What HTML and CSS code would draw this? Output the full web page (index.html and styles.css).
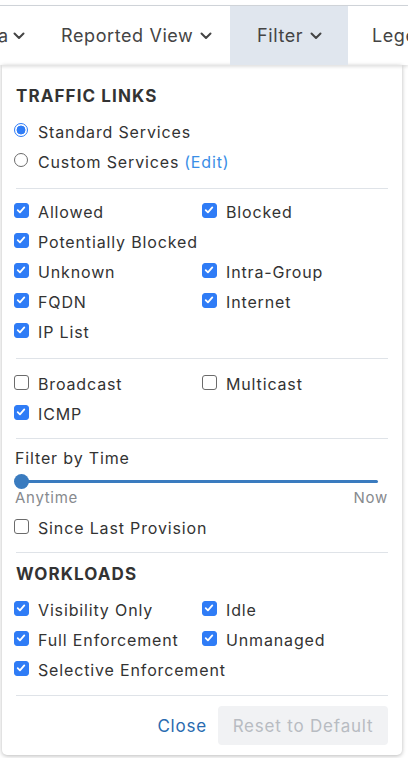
FILE: index.html
```html
<!DOCTYPE html>
<html>
<head>
<meta charset="utf-8">
<link rel="stylesheet" href="styles.css">
</head>
<body>
<div class="page">
  <nav class="topbar">
    <div class="tab tab-cut">a <svg class="chev" viewBox="0 0 12 8"><path d="M1.5 1.5 6 6l4.5-4.5" /></svg></div>
    <div class="tab tab-reported">Reported View <svg class="chev" viewBox="0 0 12 8"><path d="M1.5 1.5 6 6l4.5-4.5" /></svg></div>
    <div class="tab tab-filter active">Filter <svg class="chev" viewBox="0 0 12 8"><path d="M1.5 1.5 6 6l4.5-4.5" /></svg></div>
    <div class="tab tab-legend">Legend</div>
  </nav>

  <div class="panel">
    <h3 class="heading">TRAFFIC LINKS</h3>
    <div class="list">
      <label class="row"><span class="radio on"></span>Standard Services</label>
      <label class="row"><span class="radio"></span>Custom Services <a class="edit">(Edit)</a></label>
    </div>
    <hr class="divider d1">
    <div class="grid g1">
      <label class="row"><span class="cb on"><svg viewBox="0 0 16 16"><path d="M3.6 8.2 6.6 11.2 12.4 4.6"/></svg></span>Allowed</label>
      <label class="row"><span class="cb on"><svg viewBox="0 0 16 16"><path d="M3.6 8.2 6.6 11.2 12.4 4.6"/></svg></span>Blocked</label>
      <label class="row full"><span class="cb on"><svg viewBox="0 0 16 16"><path d="M3.6 8.2 6.6 11.2 12.4 4.6"/></svg></span>Potentially Blocked</label>
      <label class="row"><span class="cb on"><svg viewBox="0 0 16 16"><path d="M3.6 8.2 6.6 11.2 12.4 4.6"/></svg></span>Unknown</label>
      <label class="row"><span class="cb on"><svg viewBox="0 0 16 16"><path d="M3.6 8.2 6.6 11.2 12.4 4.6"/></svg></span>Intra-Group</label>
      <label class="row"><span class="cb on"><svg viewBox="0 0 16 16"><path d="M3.6 8.2 6.6 11.2 12.4 4.6"/></svg></span>FQDN</label>
      <label class="row"><span class="cb on"><svg viewBox="0 0 16 16"><path d="M3.6 8.2 6.6 11.2 12.4 4.6"/></svg></span>Internet</label>
      <label class="row full"><span class="cb on"><svg viewBox="0 0 16 16"><path d="M3.6 8.2 6.6 11.2 12.4 4.6"/></svg></span>IP List</label>
    </div>
    <hr class="divider d2">
    <div class="grid g2">
      <label class="row"><span class="cb"></span>Broadcast</label>
      <label class="row"><span class="cb"></span>Multicast</label>
      <label class="row full"><span class="cb on"><svg viewBox="0 0 16 16"><path d="M3.6 8.2 6.6 11.2 12.4 4.6"/></svg></span>ICMP</label>
    </div>
    <hr class="divider d3">
    <div class="time-title">Filter by Time</div>
    <div class="slider"><span class="track"></span><span class="thumb"></span></div>
    <div class="slider-labels"><span>Anytime</span><span>Now</span></div>
    <label class="row since"><span class="cb"></span>Since Last Provision</label>
    <hr class="divider d4">
    <h3 class="heading wl">WORKLOADS</h3>
    <div class="grid g3">
      <label class="row"><span class="cb on"><svg viewBox="0 0 16 16"><path d="M3.6 8.2 6.6 11.2 12.4 4.6"/></svg></span>Visibility Only</label>
      <label class="row"><span class="cb on"><svg viewBox="0 0 16 16"><path d="M3.6 8.2 6.6 11.2 12.4 4.6"/></svg></span>Idle</label>
      <label class="row"><span class="cb on"><svg viewBox="0 0 16 16"><path d="M3.6 8.2 6.6 11.2 12.4 4.6"/></svg></span>Full Enforcement</label>
      <label class="row"><span class="cb on"><svg viewBox="0 0 16 16"><path d="M3.6 8.2 6.6 11.2 12.4 4.6"/></svg></span>Unmanaged</label>
      <label class="row full"><span class="cb on"><svg viewBox="0 0 16 16"><path d="M3.6 8.2 6.6 11.2 12.4 4.6"/></svg></span>Selective Enforcement</label>
    </div>
    <hr class="divider d5">
    <div class="footer">
      <button class="btn-close">Close</button>
      <button class="btn-reset" disabled>Reset to Default</button>
    </div>
  </div>
</div>
</body>
</html>
```

FILE: styles.css
```css
* { box-sizing: border-box; }
html, body { margin: 0; padding: 0; background: #fff; }
body {
  font-family: Inter, "Noto Sans", "Liberation Sans", sans-serif;
  color: #333;
  width: 408px;
  height: 758px;
  overflow: hidden;
}
.page { padding-top: 5px; }

.topbar {
  display: flex;
  height: 60px;
  border-top: 1px solid #cfd3d8;
  box-shadow: 0 2px 3px rgba(0,0,0,0.12);
  position: relative;
  z-index: 1;
  overflow: hidden;
  white-space: nowrap;
}
.tab {
  display: flex;
  align-items: center;
  gap: 7px;
  font-size: 18px;
  letter-spacing: 0.6px;
  color: #444;
  flex: none;
  height: 59px;
}
.tab-cut { margin-left: -2px; width: 63px; gap: 4px; }
.tab-reported { width: 169px; }
.tab-filter { width: 118px; padding-left: 27px; background: #e0e6ee; }
.tab-legend { padding-left: 24px; }
.chev { width: 12px; height: 8px; fill: none; stroke: #444; stroke-width: 2; stroke-linecap: round; stroke-linejoin: round; }

.panel {
  margin: 0 6px 0 2px;
  background: #fff;
  border-radius: 0 0 5px 5px;
  box-shadow: 0 1px 4px rgba(0,0,0,0.28);
  padding: 21px 14px 10px 12px;
  height: 690px;
  position: relative;
}
.heading {
  margin: 0 0 0 2px;
  font-size: 17px;
  line-height: 20px;
  font-weight: 700;
  letter-spacing: 1.1px;
  color: #333;
}
.list { margin-top: 11px; }
.row {
  display: flex;
  align-items: center;
  height: 30px;
  font-size: 16px;
  letter-spacing: 0.85px;
  color: #333;
  white-space: nowrap;
}
.grid {
  display: grid;
  grid-template-columns: 188px 1fr;
}
.grid .full { grid-column: 1 / -1; }
.radio {
  width: 14px;
  height: 14px;
  border-radius: 50%;
  border: 1px solid #6b6b6b;
  margin: 0 10px 0 0;
  flex: none;
  position: relative;
  top: -2px;
}
.radio.on {
  border: 1px solid #2f7cf6;
  background: radial-gradient(circle, #2f7cf6 0 4.2px, #fff 4.7px);
}
.edit { color: #3a8ee6; margin-left: 5px; }
.cb {
  width: 15px;
  height: 15px;
  border-radius: 3px;
  border: 1.5px solid #6b6b6b;
  background: #fff;
  margin: 0 9px 0 0;
  flex: none;
  position: relative;
  top: -2px;
  display: flex;
}
.cb.on { background: #2f7cf6; border-color: #2f7cf6; }
.cb svg { width: 12px; height: 12px; fill: none; stroke: #fff; stroke-width: 2.4; stroke-linecap: round; stroke-linejoin: round; }

.divider {
  border: 0;
  height: 1px;
  background: #dfe3e8;
  margin: 0 0 0 2px;
}
.d1 { margin-top: 11px; }
.g1 { margin-top: 8px; }
.d2 { margin-top: 11px; }
.g2 { margin-top: 10px; }
.d3 { margin-top: 9px; }
.time-title { margin: 9px 0 0 1px; font-size: 16px; line-height: 20px; letter-spacing: 0.85px; }
.slider { position: relative; height: 18px; margin: 4px 10px 0 0; }
.track { position: absolute; left: 8px; right: 0; top: 8px; height: 3px; background: #3a7bbf; border-radius: 2px; }
.thumb { position: absolute; left: 0; top: 2px; width: 15px; height: 15px; border-radius: 50%; background: #3a7bbf; }
.slider-labels {
  display: flex;
  justify-content: space-between;
  font-size: 15px;
  line-height: 16px;
  color: #878a8e;
  letter-spacing: 0.7px;
  margin-left: 1px;
}
.since { margin-top: 7px; }
.d4 { margin-top: 9px; }
.wl { margin-top: 11px; }
.g3 { margin-top: 11px; }
.d5 { margin-top: 10px; }
.footer {
  display: flex;
  justify-content: flex-end;
  align-items: center;
  gap: 11px;
  margin-top: 10px;
}
button { font-family: inherit; font-size: 17px; letter-spacing: 0.8px; border: 0; cursor: pointer; }
.btn-close { background: none; color: #2a6bb0; padding: 0; }
.btn-reset {
  background: #f1f2f4;
  color: #b8bcc2;
  width: 170px;
  height: 39px;
  border-radius: 4px;
  padding: 0;
}
```
